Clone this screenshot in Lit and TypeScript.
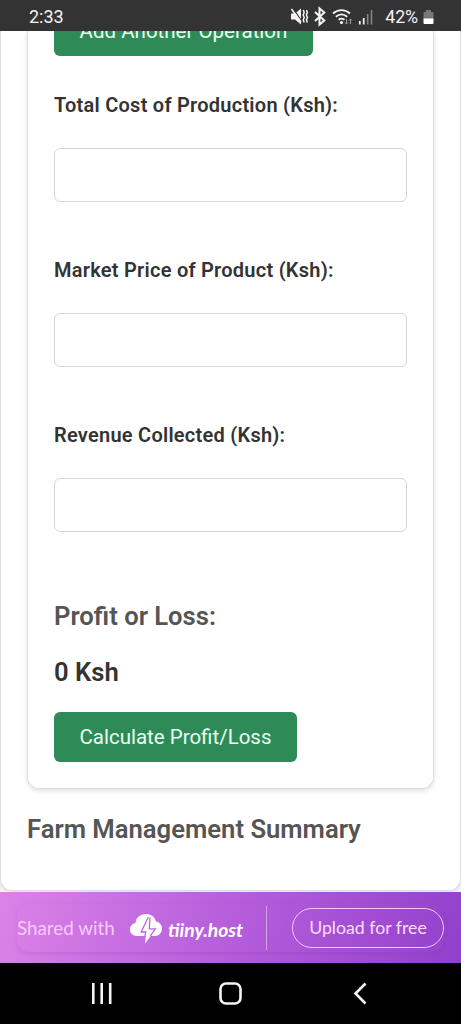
import { LitElement, html, css } from "lit";
import { customElement } from "lit/decorators.js";

@customElement("app-root")
export class AppRoot extends LitElement {
  static styles = css`
    :host { display: flex; flex-direction: column; width: 461px; height: 1024px; overflow: hidden; background: #f4f4f4; font-family: Roboto, "Liberation Sans", sans-serif; color: #333; }
    * { box-sizing: border-box; margin: 0; }
    .status { height: 31px; flex: none; background: #333; display: flex; align-items: center; padding: 2px 27px 0 29px; color: #f4f4f4; z-index: 1; }
    .time { font-size: 18px; line-height: 24px; flex: 1; }
    .status svg { display: block; flex: none; }
    .pct { font-size: 17.800px; line-height: 24px; margin: 0 5px 0 11px; letter-spacing: -0.1px; }
    .view { flex: none; height: 861px; overflow: hidden; display: flex; flex-direction: column; }
    .page { display: flow-root; flex: none; height: 860px; border: 1px solid #ddd; border-top: 0; border-radius: 0 0 12px 12px; background: #fff; padding: 0 26px; box-shadow: 0 0 4px rgba(0,0,0,.1); }
    .card { display: flow-root; height: 758px; border: 1px solid #ddd; border-top: 0; border-radius: 0 0 12px 12px; padding: 0 26px; box-shadow: 0 2px 5px rgba(0,0,0,.12); }
    .btn { display: flex; align-items: center; justify-content: center; border: 0; border-radius: 6px; background: #2e8b57; color: #e9fff2; font: 20.5px/24px Roboto, sans-serif; height: 50px; padding: 0; white-space: nowrap; }
    .add { width: 259px; margin-top: -25px; }
    .calc { width: 243px; margin-top: 25px; }
    .field { height: 165px; display: flex; flex-direction: column; }
    .first { margin-top: 37px; }
    label { font-size: 20px; line-height: 24px; font-weight: 600; letter-spacing: 0.25px; color: #333; white-space: nowrap; }
    input { margin-top: 31px; width: 353px; height: 53.500px; border: 1px solid #d5d5d5; border-radius: 6px; background: #fff; padding: 0 12px; outline: 0; }
    h3, h2 { font-size: 25.650px; line-height: 30px; font-weight: 600; color: #555; white-space: nowrap; }
    .profit { margin-top: 13px; }
    .value { font-size: 25.650px; line-height: 30px; font-weight: 600; color: #333; margin-top: 26px; }
    h2 { margin-top: 25px; }
    .promo { height: 71px; flex: none; background: linear-gradient(105deg, #dc83e8 0%, #b75fdc 48%, #9240cc 100%); display: flex; align-items: center; padding: 0 17px; font-family: Lato, sans-serif; color: #fbdcff; white-space: nowrap; }
    .panel { flex: 1; height: 48px; display: flex; align-items: center; border-radius: 12px; box-shadow: 0 2px 4px rgba(110,30,150,.14); }
    .shared { font-size: 18.800px; width: 113px; color: #f6cbfb; }
    .logo { flex: none; }
    .brand { font-size: 19.300px; font-weight: 700; font-style: italic; color: #fff; margin-left: 6px; width: 73px; padding-top: 3px; }
    .rule { width: 1px; height: 44px; background: #d99ef0; margin-left: 25px; }
    .upload { margin-left: auto; width: 152px; height: 40px; border: 1.5px solid #f3c9ff; border-radius: 20px; background: transparent; color: #fbdcff; font: 17.700px Lato, sans-serif; padding: 0; }
    .nav { flex: 1; background: #000; display: flex; justify-content: center; }
  `;

  private field(label: string, id: string, extra = "") {
    return html`<div class="field ${extra}"><label for=${id}>${label}</label><input id=${id} type="number"></div>`;
  }

  render() {
    return html`
      <div class="status">
        <span class="time">2:33</span>
        <svg width="84" height="24" viewBox="290 4 84 24" fill="none">
          <path d="M291 12.500h4l6-5v16l-6-5h-4z" fill="#f4f4f4"/>
          <path d="M293 7.500l9.500 13.500" stroke="#333" stroke-width="1.200"/>
          <path d="M291.500 8l9.500 13.500" stroke="#f4f4f4" stroke-width="1.600"/>
          <path d="M303.200 9l1 2.500-1 2.500 1 2.500-1 2.500 1 2.500M306.400 9l1 2.500-1 2.500 1 2.500-1 2.500 1 2.500" stroke="#f4f4f4" stroke-width="1.500"/>
          <path d="M315 11l9.300 8.500-4.800 4V7.500l4.800 4-9.300 8.500" stroke="#f4f4f4" stroke-width="2"/>
          <path d="M333 12.500c5-4.600 12-4.600 17 0M335.800 15.800c3.600-3 7.800-3 11.400 0M338.600 18.800c1.900-1.500 4-1.500 5.900 0" stroke="#f4f4f4" stroke-width="1.800"/>
          <circle cx="341.500" cy="21.500" r="1.600" fill="#f4f4f4"/>
          <path d="M346.500 18v5m-1.500-1.500l1.500 1.500 1.500-1.500M350.500 23v-5m-1.500 1.500l1.500-1.500 1.500 1.500" stroke="#999"/>
          <path d="M359.800 20v3.500M363.700 17v6.500" stroke="#f4f4f4" stroke-width="1.700"/>
          <path d="M367.700 13v10.500M371.500 9v14.500" stroke="#858585" stroke-width="1.600"/>
        </svg>
        <span class="pct">42%</span>
        <svg width="11" height="16" viewBox="0 0 11 16"><path d="M3 1h5v2h1.500q1 0 1 1v6H.5V4q0-1 1-1H3z" fill="#777"/><path d="M.5 9.500h10V14q0 1-1 1h-8q-1 0-1-1z" fill="#fff"/></svg>
      </div>
      <div class="view">
        <main class="page">
          <section class="card">
            <button class="btn add">Add Another Operation</button>
            ${this.field("Total Cost of Production (Ksh):", "cost", "first")}
            ${this.field("Market Price of Product (Ksh):", "price")}
            ${this.field("Revenue Collected (Ksh):", "revenue")}
            <h3 class="profit">Profit or Loss:</h3>
            <div class="value">0 Ksh</div>
            <button class="btn calc">Calculate Profit/Loss</button>
          </section>
          <h2>Farm Management Summary</h2>
        </main>
      </div>
      <div class="promo">
        <div class="panel">
          <span class="shared">Shared with</span>
          <svg class="logo" width="32" height="32" viewBox="0 0 32 32"><path d="M7 24C2.500 24 0 21 0 17.500c0-3.500 2.500-6 5.500-6.500C6 5.500 10 2 16 2c5 0 9 3 10 7.500 3.500.5 6 3.500 6 7 0 4-3 7.500-7 7.500z" fill="#fff"/><path d="M19.500 4L11.200 19.800h5L15 31.500 26.200 17h-5.600z" fill="#fff"/><path d="M18.300 5L11.200 20h4.600L14.700 25M20 5.500L19.300 16.800h6L20 24.500" fill="none" stroke="#bd65dd" stroke-width="1.300"/></svg>
          <span class="brand">tiiny.host</span>
          <span class="rule"></span>
          <button class="upload">Upload for free</button>
        </div>
      </div>
      <div class="nav">
        <svg width="461" height="61" viewBox="0 963 461 61" fill="none" stroke="#f4f4f4" stroke-width="2.600"><path d="M93.300 983v21M101.700 983v21M110.200 983v21"/><rect x="220.500" y="983.500" width="20" height="20" rx="5.500"/><path d="M365.500 983.500L355.500 993.500l10 10"/></svg>
      </div>
    `;
  }
}
